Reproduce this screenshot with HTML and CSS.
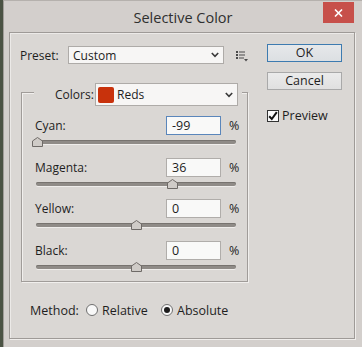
FILE: index.html
```html
<!DOCTYPE html>
<html lang="en">

<head>
    <meta charset="UTF-8">
    <meta name="viewport" content="width=device-width, initial-scale=1.0">
    <title>Selective Color</title>
    <link rel="stylesheet" href="styles.css">
</head>

<body>
    <div class="window">
        <div class="titlebar">
            <span class="title">Selective Color</span>
            <div class="close">
                <svg width="9" height="8" viewBox="0 0 9 8"><path d="M1 0.5 L8 7.5 M8 0.5 L1 7.5" stroke="#fff" stroke-width="1.6" fill="none"/></svg>
            </div>
        </div>
        <div class="client">
            <div class="main">
                <div class="preset-row">
                    <span class="lbl">Preset:</span>
                    <div class="select preset-select">
                        <span class="sel-text">Custom</span>
                        <svg class="chev" width="8" height="6" viewBox="0 0 8 6"><path d="M0.8 1 L4 4.4 L7.2 1" stroke="#3a3a3a" stroke-width="1.6" fill="none"/></svg>
                    </div>
                    <svg class="list-icon" width="12" height="11" viewBox="0 0 12 11">
                        <rect x="0" y="0" width="2" height="2" fill="#4a4a4a"/>
                        <rect x="3" y="0.5" width="6" height="1" fill="#4a4a4a"/>
                        <rect x="0" y="3" width="2" height="2" fill="#4a4a4a"/>
                        <rect x="3" y="3.5" width="6" height="1" fill="#4a4a4a"/>
                        <rect x="0" y="6" width="2" height="2" fill="#4a4a4a"/>
                        <rect x="3" y="6.5" width="5" height="1" fill="#4a4a4a"/>
                        <path d="M8 8 L12 8 L10 10.5 Z" fill="#4a4a4a"/>
                    </svg>
                </div>

                <div class="group">
                    <div class="group-head">
                        <span class="lbl colors-lbl">Colors:</span>
                        <div class="select colors-select">
                            <span class="swatch"></span>
                            <span class="sel-text">Reds</span>
                            <svg class="chev" width="8" height="6" viewBox="0 0 8 6"><path d="M0.8 1 L4 4.4 L7.2 1" stroke="#3a3a3a" stroke-width="1.6" fill="none"/></svg>
                        </div>
                    </div>

                    <div class="adj adj-first">
                        <div class="adj-top">
                            <span class="lbl">Cyan:</span>
                            <div class="num focused">-99</div>
                            <span class="pct">%</span>
                        </div>
                        <div class="slider">
                            <div class="track"></div>
                            <svg class="thumb" style="left: 0.5%" width="11" height="10" viewBox="0 0 11 10"><path d="M0.5 4 L5.5 0.5 L10.5 4 L10.5 9.5 L0.5 9.5 Z" fill="#cfcbc7" stroke="#6e6a67"/></svg>
                        </div>
                    </div>

                    <div class="adj">
                        <div class="adj-top">
                            <span class="lbl">Magenta:</span>
                            <div class="num">36</div>
                            <span class="pct">%</span>
                        </div>
                        <div class="slider">
                            <div class="track"></div>
                            <svg class="thumb" style="left: 68%" width="11" height="10" viewBox="0 0 11 10"><path d="M0.5 4 L5.5 0.5 L10.5 4 L10.5 9.5 L0.5 9.5 Z" fill="#cfcbc7" stroke="#6e6a67"/></svg>
                        </div>
                    </div>

                    <div class="adj">
                        <div class="adj-top">
                            <span class="lbl">Yellow:</span>
                            <div class="num">0</div>
                            <span class="pct">%</span>
                        </div>
                        <div class="slider">
                            <div class="track"></div>
                            <svg class="thumb" style="left: 50%" width="11" height="10" viewBox="0 0 11 10"><path d="M0.5 4 L5.5 0.5 L10.5 4 L10.5 9.5 L0.5 9.5 Z" fill="#cfcbc7" stroke="#6e6a67"/></svg>
                        </div>
                    </div>

                    <div class="adj">
                        <div class="adj-top">
                            <span class="lbl">Black:</span>
                            <div class="num">0</div>
                            <span class="pct">%</span>
                        </div>
                        <div class="slider">
                            <div class="track"></div>
                            <svg class="thumb" style="left: 50%" width="11" height="10" viewBox="0 0 11 10"><path d="M0.5 4 L5.5 0.5 L10.5 4 L10.5 9.5 L0.5 9.5 Z" fill="#cfcbc7" stroke="#6e6a67"/></svg>
                        </div>
                    </div>
                </div>

                <div class="method">
                    <span class="lbl method-lbl">Method:</span>
                    <div class="opt opt-first"><span class="radio"></span>Relative</div>
                    <div class="opt"><span class="radio on"></span>Absolute</div>
                </div>
            </div>

            <div class="side">
                <button class="btn default">OK</button>
                <button class="btn cancel">Cancel</button>
                <div class="check">
                    <span class="box">
                        <svg width="10" height="10" viewBox="0 0 10 10"><path d="M1.2 5.2 L3.8 8 L8.8 1.2" stroke="#111" stroke-width="2" fill="none"/></svg>
                    </span>
                    Preview
                </div>
            </div>
        </div>
    </div>
</body>

</html>
```

FILE: styles.css
```css
body {
    margin: 0;
    background-color: #4b5344;
    font-family: "Open Sans", "Noto Sans", sans-serif;
    font-size: 12px;
    color: #1e1e1e;
}

.window {
    margin-left: 3px;
    height: 347px;
    background-color: #d3cfcc;
    border-left: 1px solid #a19d99;
    border-top: 1px solid #b5b1ad;
    box-sizing: border-box;
}

.titlebar {
    position: relative;
    height: 31px;
    display: flex;
    justify-content: center;
    align-items: center;
}

.title {
    font-size: 14.5px;
    color: #2f2f2f;
    padding-top: 2px;
}

.close {
    position: absolute;
    top: 1px;
    right: 8px;
    width: 31px;
    height: 21px;
    background-color: #c7504a;
    display: flex;
    justify-content: center;
    align-items: center;
}

.client {
    margin: 0 7px 0 5px;
    height: 307px;
    box-sizing: border-box;
    border: 1px solid #9e9a97;
    box-shadow: 1px 1px 0 #efedeb, inset 1px 1px 0 #ecEae8;
    background-color: #dad7d4;
    display: flex;
    gap: 19px;
    padding: 11px 0 0 10px;
}

.main {
    width: 228px;
}

.lbl {
    white-space: nowrap;
}

.preset-row {
    display: flex;
    align-items: center;
    height: 18px;
    margin-top: 2px;
}

.preset-row .lbl {
    width: 48px;
}

.select {
    box-sizing: border-box;
    display: flex;
    align-items: center;
    border: 1px solid #aeaba8;
    background-color: #f7f6f5;
}

.sel-text {
    flex: 1;
}

.chev {
    margin-right: 4px;
}

.preset-select {
    width: 156px;
    height: 18px;
    padding-left: 4px;
}

.list-icon {
    margin-left: 12px;
    margin-top: 2px;
}

.group {
    margin-top: 28px;
    margin-left: 1px;
    width: 227px;
    height: 190px;
    box-sizing: border-box;
    border: 1px solid #a09c99;
    box-shadow: inset 1px 1px 0 #f1efed, 1px 1px 0 #f1efed;
}

.group-head {
    display: flex;
    align-items: center;
    width: max-content;
    height: 23px;
    margin: -10px 0 0 12px;
    padding: 0 4px 0 21px;
    background-color: #dad7d4;
}

.colors-lbl {
    width: 40px;
}

.colors-select {
    width: 143px;
    height: 23px;
    padding-left: 2px;
}

.swatch {
    width: 16px;
    height: 16px;
    border-radius: 2px;
    background-color: #c8320c;
    margin-right: 3px;
}

.adj {
    padding: 0 10px 0 13px;
}

.adj-first {
    margin-top: 10px;
}

.adj-top {
    display: flex;
    align-items: center;
    height: 19px;
}

.adj-top .lbl {
    flex: 1;
}

.num {
    width: 55px;
    height: 19px;
    box-sizing: border-box;
    border: 1px solid #b0adaa;
    background-color: #f9f9f8;
    padding-left: 5px;
    font-size: 12.5px;
    line-height: 17px;
}

.num.focused {
    border-color: #5a86bb;
}

.pct {
    width: 8px;
    margin-left: 8px;
    font-size: 12.5px;
}

.slider {
    position: relative;
    height: 9px;
    padding-top: 5px;
    margin: 0 1px 8.7px 1px;
}

.track {
    height: 4px;
    border-radius: 2px;
    background-color: #8f8b87;
    box-shadow: inset 0 1px 0 #77736f, 0 1px 0 #efedeb;
}

.thumb {
    position: absolute;
    top: 2px;
    margin-left: -5.5px;
}

.method {
    display: flex;
    align-items: center;
    height: 14px;
    margin-top: 21px;
    padding-left: 10px;
    font-size: 12.5px;
}

.method-lbl {
    width: 56px;
}

.opt {
    display: flex;
    align-items: center;
}

.opt-first {
    width: 75px;
}

.radio {
    width: 12px;
    height: 12px;
    box-sizing: border-box;
    border: 1px solid #6f6f6f;
    border-radius: 50%;
    background-color: #f8f8f8;
    margin-right: 4px;
    display: flex;
    justify-content: center;
    align-items: center;
}

.radio.on::after {
    content: "";
    width: 6px;
    height: 6px;
    border-radius: 50%;
    background-color: #1c1c1c;
}

.side {
    width: 75px;
    display: flex;
    flex-direction: column;
}

.btn {
    width: 75px;
    height: 18px;
    box-sizing: border-box;
    padding: 0;
    border: 1px solid #a9a9a9;
    border-radius: 0;
    background: linear-gradient(#ebebeb, #e0e0e0);
    font-family: inherit;
    font-size: 12.5px;
    color: #1e1e1e;
    line-height: 16px;
}

.btn.default {
    border-color: #3d7bb0;
    background: linear-gradient(#e6e8ea, #dcdfe2);
}

.btn.cancel {
    margin-top: 10px;
}

.check {
    display: flex;
    align-items: center;
    margin-top: 17px;
    font-size: 12.5px;
}

.box {
    width: 12px;
    height: 12px;
    box-sizing: border-box;
    border: 1px solid #333;
    background-color: #fafafa;
    margin-right: 3px;
    display: flex;
    justify-content: center;
    align-items: center;
}
```
